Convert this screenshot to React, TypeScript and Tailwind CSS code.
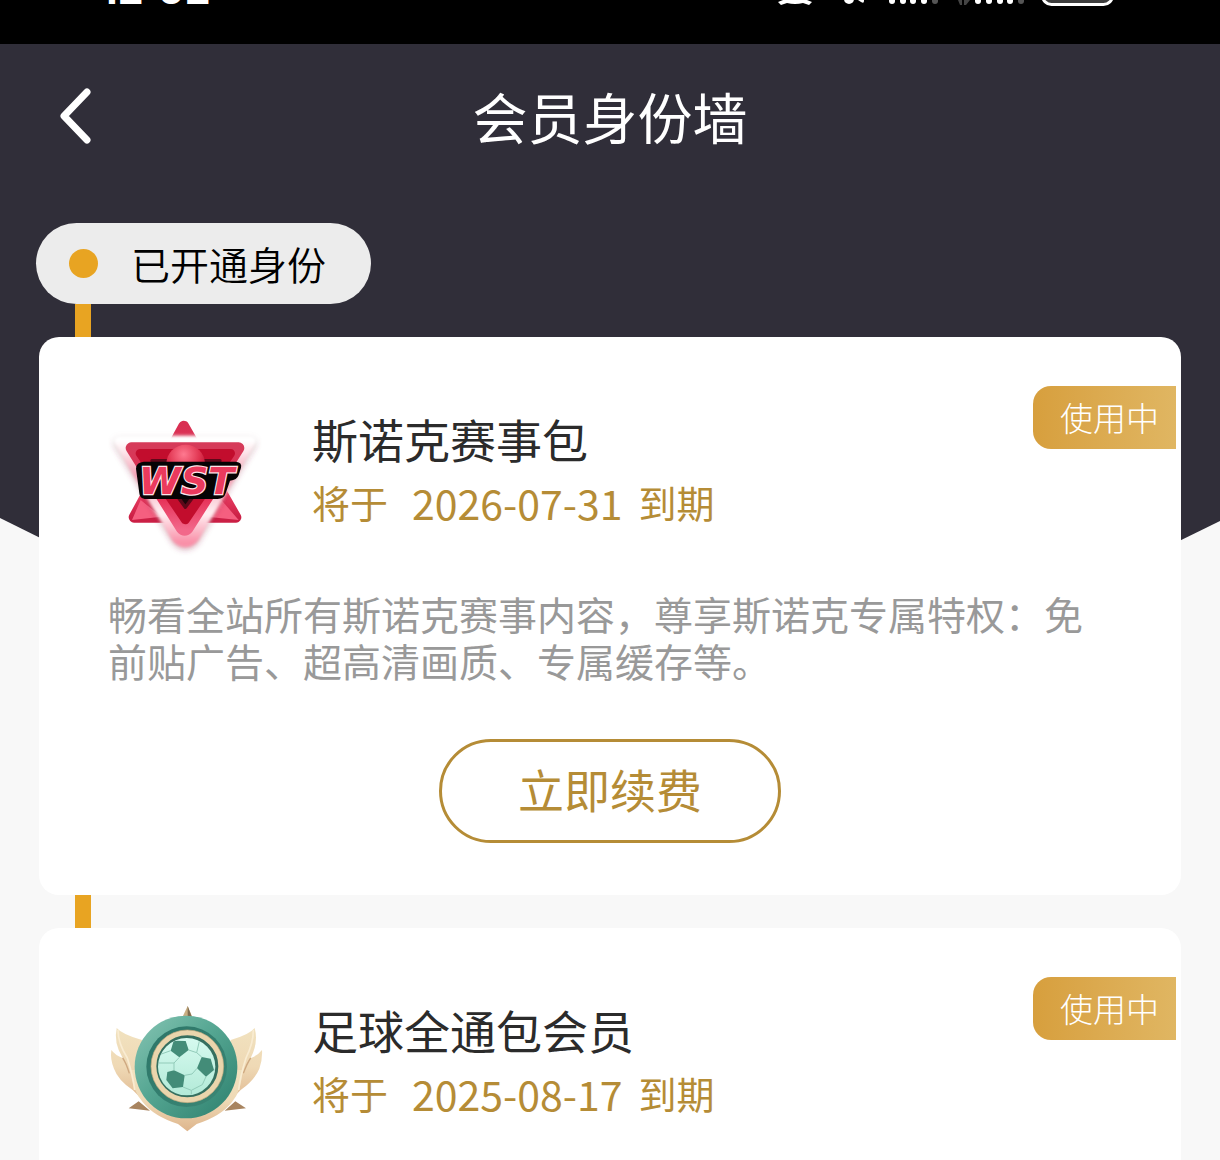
import React from 'react';

type Membership = {
    id: string;
    name: string;
    expires: string;
    description: string;
    icon: React.ReactNode;
};

const StatusIcons = () => (
    <svg width="340" height="8" viewBox="776 0 340 8" fill="#fff" aria-hidden="true">
        <path d="M783 0h24l5 2-3 3-6-2q-8 2-16 0l-6 2-3-3z" />
        <ellipse cx="849" cy="-1" rx="5" ry="5" />
        <path d="M858 0h6v1q0 3-3 1z" />
        {[892, 903, 913, 924, 978, 989, 1000, 1010].map(x => (
            <rect key={x} x={x - 3} y="-10" width="6" height="14" rx="3" />
        ))}
        {[935, 1021].map(x => (
            <rect key={x} x={x - 3} y="-10" width="6" height="14" rx="3" fill="#555" />
        ))}
        <path d="M958 0h4v5h-2zM964 0h6l-4 5h-2z" fill="#444" />
        <rect x="1042.500" y="-26" width="70" height="30.500" rx="9" fill="#3c3c3c" stroke="#fff" strokeWidth="3" />
    </svg>
);

const SnookerIcon = () => (
    <svg className="size-[152px] shrink-0 overflow-visible" viewBox="54 18 456 456" role="img" aria-label="WST">
        <defs>
            <linearGradient id="snookerEdge" x1="0" y1="0" x2="0" y2="1">
                <stop offset="0" stopColor="#ffffff" />
                <stop offset=".12" stopColor="#fde3e9" />
                <stop offset=".35" stopColor="#f59db2" />
                <stop offset=".72" stopColor="#fff0f3" />
                <stop offset="1" stopColor="#f990a8" />
            </linearGradient>
            <linearGradient id="snookerFace" x1="0" y1="0" x2="0" y2="1">
                <stop offset="0" stopColor="#d63a59" />
                <stop offset=".55" stopColor="#e4284f" />
                <stop offset="1" stopColor="#f2688a" />
            </linearGradient>
            <linearGradient id="snookerBack" x1="0" y1="0" x2="0" y2="1">
                <stop offset="0" stopColor="#d92f52" />
                <stop offset=".7" stopColor="#ef4468" />
                <stop offset="1" stopColor="#cb1f45" />
            </linearGradient>
            <radialGradient id="snookerBall" cx=".45" cy=".25" r=".7">
                <stop offset="0" stopColor="#ff7990" />
                <stop offset=".6" stopColor="#e0334f" />
                <stop offset="1" stopColor="#a90e2c" />
            </radialGradient>
            <filter id="snookerShadow" x="-20%" y="-20%" width="140%" height="150%">
                <feDropShadow dx="0" dy="7" stdDeviation="8" floodColor="#96304d" floodOpacity=".4" />
            </filter>
            <filter id="snookerSoft">
                <feGaussianBlur stdDeviation="4" />
            </filter>
        </defs>
        <path d="M281 78 438 352H132z" fill="url(#snookerBack)" stroke="url(#snookerBack)" strokeWidth="32" strokeLinejoin="round" />
        <path d="M126 360 152 300 214 350zM446 360 394 300 350 350z" fill="#f55f80" />
        <g filter="url(#snookerShadow)">
            <path d="M88 123H482L312 412Q286 440 260 412z" fill="url(#snookerEdge)" stroke="url(#snookerEdge)" strokeWidth="32" strokeLinejoin="round" filter="url(#snookerSoft)" />
        </g>
        <path d="M124 144H446L294 384Q284 396 274 384z" fill="url(#snookerFace)" stroke="url(#snookerFace)" strokeWidth="34" strokeLinejoin="round" />
        <path d="M150 160H422L286 360z" fill="#c20d2d" stroke="#c20d2d" strokeWidth="26" strokeLinejoin="round" />
        <path d="M186 182H390L286 322z" fill="#1c0509" stroke="#5e0819" strokeWidth="10" strokeLinejoin="round" />
        <circle cx="287" cy="192" r="58" fill="url(#snookerBall)" />
        <path d="M162 185H438q19 2 15 18l-7 22q-5 15-26 17l-13 38q-5 17-24 17H164q-15-2-16-17l-10-74q0-19 24-21z" fill="#050304" />
        <text
            x="147"
            y="281"
            fill="#eb3a5d"
            stroke="#ffe4e9"
            strokeWidth="7"
            paintOrder="stroke"
            fontFamily="DejaVu Sans, sans-serif"
            fontSize="114"
            fontWeight="700"
            fontStyle="italic"
        >
            WST
        </text>
    </svg>
);

const FootballIcon = () => (
    <svg className="size-[152px] shrink-0 overflow-visible" viewBox="54 21 456 456" aria-hidden="true">
        <defs>
            <linearGradient id="wingGold" x1="0" y1="0" x2="0" y2="1">
                <stop offset="0" stopColor="#f1e2bf" />
                <stop offset=".5" stopColor="#efd9b5" />
                <stop offset="1" stopColor="#deb58c" />
            </linearGradient>
            <linearGradient id="outerRing" x1="0" y1="0" x2="1" y2="1">
                <stop offset="0" stopColor="#87c5b4" />
                <stop offset=".45" stopColor="#55a692" />
                <stop offset="1" stopColor="#2c7f6d" />
            </linearGradient>
            <linearGradient id="innerRing" x1="0" y1="0" x2="1" y2="1">
                <stop offset="0" stopColor="#2c7568" />
                <stop offset="1" stopColor="#3b8775" />
            </linearGradient>
            <linearGradient id="ballShade" x1="0" y1="0" x2="0" y2="1">
                <stop offset="0" stopColor="#d6faef" />
                <stop offset="1" stopColor="#b3ead8" />
            </linearGradient>
            <clipPath id="ballClip">
                <circle cx="290" cy="230" r="85" />
            </clipPath>
        </defs>
        <path d="M276 84 293 48 308 84z" fill="#c9ae82" />
        <path d="M293 48 306 82H293z" fill="#806d50" />
        <path d="M116 355 146 334 180 362zM468 355 436 334 404 362z" fill="#a8845f" />
        <g fill="url(#wingGold)">
            <path d="M80 114Q98 134 156 150L200 330 174 346 128 300Q84 270 72 236Q60 208 64 180Q76 196 98 204Q70 158 80 114z" />
            <path d="M494 114Q478 134 422 150L378 330 408 346 452 300Q494 270 508 236Q518 208 516 180Q504 196 482 204Q506 158 494 114z" />
            <path d="M122 240Q126 300 158 336Q190 378 264 402L292 424 320 402Q394 378 426 336Q456 300 456 240z" />
        </g>
        <path d="M98 204Q108 218 118 250M482 204Q472 218 460 250" fill="none" stroke="#cfa981" strokeWidth="4" />
        <path d="M84 120Q84 160 112 204Q130 262 134 300M490 120Q490 160 468 204Q450 262 446 300" fill="none" stroke="#f9ecd2" strokeWidth="5" />
        <circle cx="288" cy="231" r="154" fill="url(#outerRing)" />
        <circle cx="290" cy="230" r="121" fill="url(#innerRing)" />
        <circle cx="292" cy="229" r="101" fill="#356f5f" stroke="#ead5ac" strokeWidth="16" />
        <circle cx="292" cy="229" r="109" fill="none" stroke="#c4ab7e" strokeWidth="2" />
        <circle cx="290" cy="230" r="86" fill="url(#ballShade)" />
        <g clipPath="url(#ballClip)">
            <g fill="#438c78">
                <path d="M251 152 287 153 296 180 268 202 242 182z" />
                <path d="M335 201 362 206 372 240 348 260 321 235z" />
                <path d="M232 246 252 241 284 256 279 291 248 295 229 270z" />
            </g>
            <path d="M296 180 320 188 335 201M268 202 252 219 252 241M321 235 306 252 284 256M279 291 304 301 337 284 348 260M206 219 252 219M330 145 320 188M304 301V325M242 182 206 195M372 240H390" fill="none" stroke="#92cbb9" strokeWidth="3" />
        </g>
    </svg>
);

const memberships: Membership[] = [
    {
        id: 'snooker',
        name: '斯诺克赛事包',
        expires: '2026-07-31',
        description: '畅看全站所有斯诺克赛事内容，尊享斯诺克专属特权：免前贴广告、超高清画质、专属缓存等。',
        icon: <SnookerIcon />,
    },
    {
        id: 'football',
        name: '足球全通包会员',
        expires: '2025-08-17',
        description: '',
        icon: <FootballIcon />,
    },
];

const Connector = () => <div className="ml-9 h-[33px] w-4 bg-[#e8a422]" />;

const MembershipCard = ({ item }: { item: Membership }) => (
    <article className="relative min-h-[558px] rounded-[20px] bg-white px-[69px] pt-[69px] pb-[52px]">
        <span className="absolute top-[49px] right-[5px] rounded-l-[18px] bg-linear-to-r from-[#d79f3d] to-[#e0b662] pr-[17px] pl-[27px] text-[33px] leading-[63px] font-light text-white">
            使用中
        </span>
        <div className="flex gap-[52px]">
            {item.icon}
            <div className="leading-[64px]">
                <h2 className="text-[46px] text-[#2b2b2b]">{item.name}</h2>
                <p className="flex text-[38px] text-[#b58c36]">
                    <span>将于</span>
                    <time className="mx-6 mr-4 text-[41px]">{item.expires}</time>
                    <span>到期</span>
                </p>
            </div>
        </div>
        {item.description && (
            <>
                <p className="mt-8 text-[39px] leading-[47px] text-[#999]">{item.description}</p>
                <div className="mt-[55px] flex justify-center">
                    <button type="button" className="h-[104px] rounded-full border-3 border-[#b58c36] px-[76px] pb-1.5 text-[46px] leading-[60px] text-[#b58c36]">
                        立即续费
                    </button>
                </div>
            </>
        )}
    </article>
);

const App = () => {
    return (
        <div className="relative h-screen overflow-hidden bg-[#f8f8f8] font-['Noto_Sans_CJK_SC',sans-serif]">
            <div className="flex h-11 items-start justify-between overflow-hidden bg-black pr-[104px] pl-[100px]">
                <span className="-mt-[31px] font-['Inter',sans-serif] text-[41px] leading-[40px] font-bold text-white">12:02</span>
                <StatusIcons />
            </div>
            {/* dark backdrop that narrows to a point behind the first card */}
            <div className="absolute inset-x-0 top-11 h-[776px] bg-[#302e39] [clip-path:polygon(0_0,100%_0,100%_477px,50%_100%,0_474px)]" />
            <div className="relative">
                <header className="grid h-[148px] grid-cols-[1fr_auto_1fr] items-center px-[58px]">
                    <button type="button" aria-label="返回" className="w-[34px]">
                        <svg width="34" height="60" viewBox="0 0 34 60" fill="none" stroke="#fff" strokeWidth="7" strokeLinecap="round" strokeLinejoin="round">
                            <path d="M29 4 6 28 29 52" />
                        </svg>
                    </button>
                    <h1 className="pb-1.5 text-[55px] leading-[80px] text-white">会员身份墙</h1>
                </header>
                <main className="px-[39px] pt-[31px]">
                    <div className="-ml-[3px] flex h-[81px] w-fit items-center gap-[33px] rounded-full bg-[#ececec] pr-[45px] pl-[33px]">
                        <span className="size-[29px] rounded-full bg-[#e8a422]" />
                        <span className="text-[39px] font-[350] text-black">已开通身份</span>
                    </div>
                    {memberships.map(item => (
                        <React.Fragment key={item.id}>
                            <Connector />
                            <MembershipCard item={item} />
                        </React.Fragment>
                    ))}
                </main>
            </div>
        </div>
    );
};

export default App;
